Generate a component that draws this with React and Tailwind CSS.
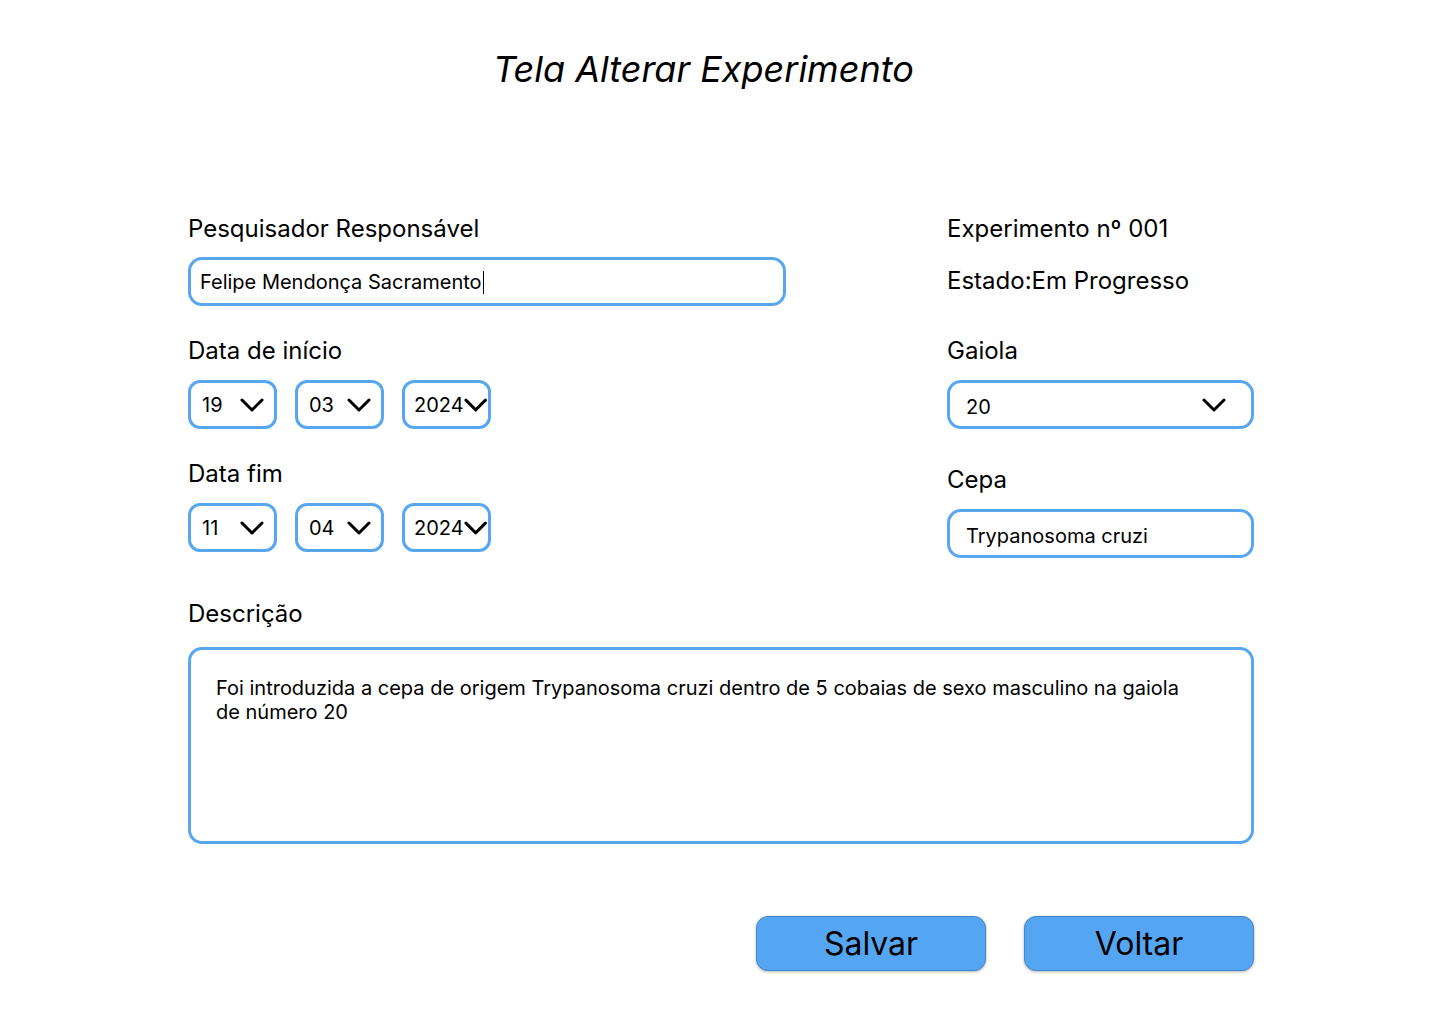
const BLUE = 'border-[3px] border-[#58a6f0]';

function Chevron({ className = '' }) {
  return (
    <svg viewBox="0 0 24 14" className={`w-[24px] h-[14px] ${className}`} fill="none" stroke="black" strokeWidth="3" strokeLinecap="round" strokeLinejoin="round">
      <path d="M2 2 L12 12 L22 2" />
    </svg>
  );
}

function DateSelect({ value, wide }) {
  return (
    <div className={`${BLUE} w-[89px] h-[49px] rounded-[12px] flex items-center ${wide ? 'pl-[9px] pr-[1px]' : 'pl-[11px] pr-[10px] justify-between'}`}>
      <span className="text-[20px] leading-none">{value}</span>
      <Chevron />
    </div>
  );
}

function Label({ children, className = '' }) {
  return <div className={`text-[24px] leading-[28px] ${className}`}>{children}</div>;
}

export default function App() {
  return (
    <div className="w-[1440px] h-[1024px] bg-white text-black pl-[188px] pt-[47px]" style={{ fontFamily: 'Inter, "Noto Sans", sans-serif' }}>
      <h1 className="ml-[305px] text-[36px] leading-[44px] italic font-normal">Tela Alterar Experimento</h1>

      <div className="flex mt-[124px]">
        <div className="w-[598px]">
          <Label>Pesquisador Responsável</Label>
          <div className={`${BLUE} mt-[14px] h-[49px] rounded-[14px] flex items-center pl-[9px] pt-[1px] text-[20px]`}>
            <span>Felipe Mendonça Sacramento</span>
            <span className="w-[1px] h-[23px] bg-black ml-[1px]" />
          </div>

          <Label className="mt-[31px]">Data de início</Label>
          <div className="flex gap-[18px] mt-[15px]">
            <DateSelect value="19" />
            <DateSelect value="03" />
            <DateSelect value="2024" wide />
          </div>

          <Label className="mt-[31px]">Data fim</Label>
          <div className="flex gap-[18px] mt-[15px]">
            <DateSelect value="11" />
            <DateSelect value="04" />
            <DateSelect value="2024" wide />
          </div>
        </div>

        <div className="ml-[161px] w-[307px]">
          <Label>Experimento nº 001</Label>
          <Label className="mt-[24px]">Estado:Em Progresso</Label>

          <Label className="mt-[42px]">Gaiola</Label>
          <div className={`${BLUE} mt-[15px] h-[49px] rounded-[14px] flex items-center justify-between pl-[16px] pr-[25px]`}>
            <span className="text-[20px] pt-[5px]">20</span>
            <Chevron />
          </div>

          <Label className="mt-[37px]">Cepa</Label>
          <div className={`${BLUE} mt-[15px] h-[49px] rounded-[14px] flex items-center pl-[16px]`}>
            <span className="text-[20px] pt-[5px]">Trypanosoma cruzi</span>
          </div>
        </div>
      </div>

      <Label className="mt-[42px]">Descrição</Label>
      <div className={`${BLUE} mt-[19px] w-[1066px] h-[197px] rounded-[14px] pl-[25px] pt-[26px]`}>
        <p className="w-[965px] text-[20px] leading-[24px]">
          Foi introduzida a cepa de origem Trypanosoma cruzi dentro de 5 cobaias de sexo masculino na gaiola de número 20
        </p>
      </div>

      <div className="w-[1066px] flex justify-end gap-[38px] mt-[72px]">
        <button className="w-[230px] h-[55px] rounded-[12px] bg-[#55a6f2] border border-[#4186cc] shadow-[0_1px_3px_rgba(0,0,0,0.3)] text-[32px] leading-none">Salvar</button>
        <button className="w-[230px] h-[55px] rounded-[12px] bg-[#55a6f2] border border-[#4186cc] shadow-[0_1px_3px_rgba(0,0,0,0.3)] text-[32px] leading-none">Voltar</button>
      </div>
    </div>
  );
}
